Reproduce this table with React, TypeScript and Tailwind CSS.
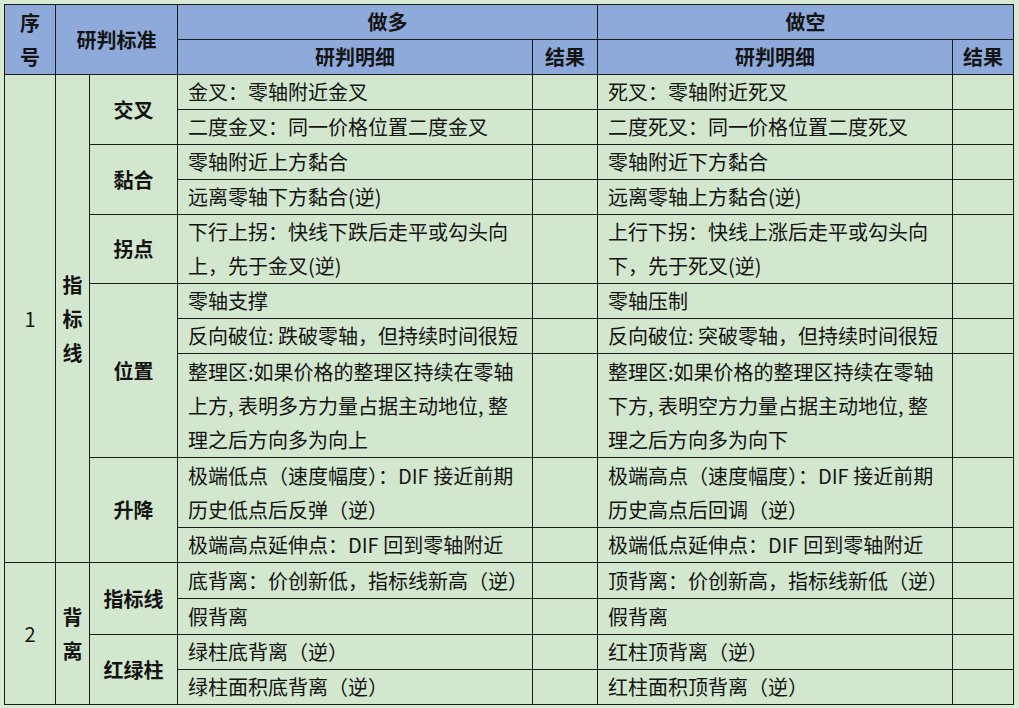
import React from "react";

type Row = {
  h: string;
  long: string[];
  short: string[];
};

type Block = { label: string; rows: Row[] };

const group1: Block[] = [
  {
    label: "交叉",
    rows: [
      { h: "h-[35px]", long: ["金叉：零轴附近金叉"], short: ["死叉：零轴附近死叉"] },
      {
        h: "h-[35px]",
        long: ["二度金叉：同一价格位置二度金叉"],
        short: ["二度死叉：同一价格位置二度死叉"],
      },
    ],
  },
  {
    label: "黏合",
    rows: [
      { h: "h-[35px]", long: ["零轴附近上方黏合"], short: ["零轴附近下方黏合"] },
      { h: "h-[35px]", long: ["远离零轴下方黏合(逆)"], short: ["远离零轴上方黏合(逆)"] },
    ],
  },
  {
    label: "拐点",
    rows: [
      {
        h: "h-[69px]",
        long: ["下行上拐：快线下跌后走平或勾头向", "上，先于金叉(逆)"],
        short: ["上行下拐：快线上涨后走平或勾头向", "下，先于死叉(逆)"],
      },
    ],
  },
  {
    label: "位置",
    rows: [
      { h: "h-[35px]", long: ["零轴支撑"], short: ["零轴压制"] },
      {
        h: "h-[35px]",
        long: ["反向破位: 跌破零轴，但持续时间很短"],
        short: ["反向破位: 突破零轴，但持续时间很短"],
      },
      {
        h: "h-[104px]",
        long: [
          "整理区:如果价格的整理区持续在零轴",
          "上方, 表明多方力量占据主动地位, 整",
          "理之后方向多为向上",
        ],
        short: [
          "整理区:如果价格的整理区持续在零轴",
          "下方, 表明空方力量占据主动地位, 整",
          "理之后方向多为向下",
        ],
      },
    ],
  },
  {
    label: "升降",
    rows: [
      {
        h: "h-[70px]",
        long: ["极端低点（速度幅度）：DIF 接近前期", "历史低点后反弹（逆）"],
        short: ["极端高点（速度幅度）：DIF 接近前期", "历史高点后回调（逆）"],
      },
      {
        h: "h-[35px]",
        long: ["极端高点延伸点：DIF 回到零轴附近"],
        short: ["极端低点延伸点：DIF 回到零轴附近"],
      },
    ],
  },
];

const group2: Block[] = [
  {
    label: "指标线",
    rows: [
      {
        h: "h-[36px]",
        long: ["底背离：价创新低，指标线新高（逆）"],
        short: ["顶背离：价创新高，指标线新低（逆）"],
      },
      { h: "h-[36px]", long: ["假背离"], short: ["假背离"] },
    ],
  },
  {
    label: "红绿柱",
    rows: [
      { h: "h-[35px]", long: ["绿柱底背离（逆）"], short: ["红柱顶背离（逆）"] },
      { h: "h-[35px]", long: ["绿柱面积底背离（逆）"], short: ["红柱面积顶背离（逆）"] },
    ],
  },
];

const cell = "border border-[#1c1c1c] p-0";
const head = `${cell} bg-[#8eaadb] font-bold text-center`;

function Lines({ lines }: { lines: string[] }) {
  return (
    <div className="px-[10px] leading-[34px] whitespace-nowrap">
      {lines.map((l, i) => (
        <div key={i}>{l}</div>
      ))}
    </div>
  );
}

function Stacked({ chars, bold }: { chars: string; bold?: boolean }) {
  return (
    <div className={`flex flex-col items-center leading-[34px] ${bold ? "font-bold" : ""}`}>
      {chars.split("").map((c, i) => (
        <span key={i}>{c}</span>
      ))}
    </div>
  );
}

function Group({ num, title, items }: { num: string; title: string; items: Block[] }) {
  const total = items.reduce((n, g) => n + g.rows.length, 0);
  const out: React.ReactNode[] = [];
  items.forEach((g, gi) => {
    g.rows.forEach((r, ri) => {
      out.push(
        <tr key={`${gi}-${ri}`} className={r.h}>
          {gi === 0 && ri === 0 && (
            <>
              <td rowSpan={total} className={`${cell} text-center`}>
                {num}
              </td>
              <td rowSpan={total} className={cell}>
                <Stacked chars={title} bold />
              </td>
            </>
          )}
          {ri === 0 && (
            <td rowSpan={g.rows.length} className={`${cell} text-center font-bold`}>
              {g.label}
            </td>
          )}
          <td className={cell}>
            <Lines lines={r.long} />
          </td>
          <td className={cell}></td>
          <td className={cell}>
            <Lines lines={r.short} />
          </td>
          <td className={cell}></td>
        </tr>
      );
    });
  });
  return <>{out}</>;
}

export default function App() {
  return (
    <div className="w-[1019px] h-[708px] bg-[#d6ebd2] pt-[4px] pl-[4px] overflow-hidden text-[#141414] text-[20px] font-['Noto_Sans_CJK_SC','Noto_Sans',sans-serif]">
      <table className="border-collapse table-fixed bg-[#d2e7ce] w-[1009px]">
        <colgroup>
          <col className="w-[51px]" />
          <col className="w-[34px]" />
          <col className="w-[88px]" />
          <col className="w-[355px]" />
          <col className="w-[65px]" />
          <col className="w-[355px]" />
          <col className="w-[61px]" />
        </colgroup>
        <thead>
          <tr className="h-[35px]">
            <td rowSpan={2} className={head}>
              <Stacked chars="序号" />
            </td>
            <td rowSpan={2} colSpan={2} className={head}>
              研判标准
            </td>
            <td colSpan={2} className={head}>
              做多
            </td>
            <td colSpan={2} className={head}>
              做空
            </td>
          </tr>
          <tr className="h-[35px]">
            <td className={head}>研判明细</td>
            <td className={head}>结果</td>
            <td className={head}>研判明细</td>
            <td className={head}>结果</td>
          </tr>
        </thead>
        <tbody>
          <Group num="1" title="指标线" items={group1} />
          <Group num="2" title="背离" items={group2} />
        </tbody>
      </table>
    </div>
  );
}
